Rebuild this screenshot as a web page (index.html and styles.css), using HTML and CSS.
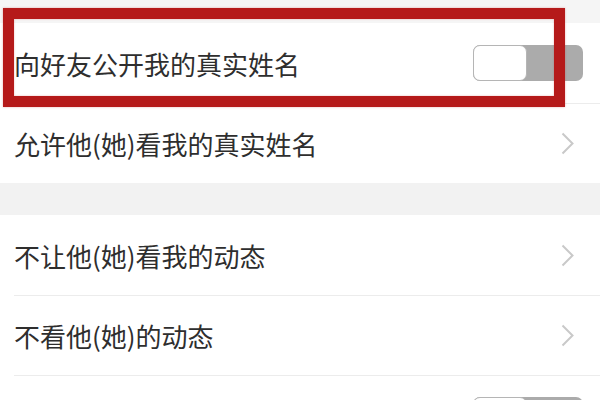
FILE: index.html
```html
<!DOCTYPE html>
<html lang="zh-CN">
<head>
<meta charset="utf-8">
<title>朋友权限</title>
<link rel="stylesheet" href="styles.css">
</head>
<body>
<div class="screen">
  <div class="top-gap"></div>
  <div class="group">
    <div class="row">
      <span class="label">向好友公开我的真实姓名</span>
      <span class="switch"><span class="thumb"></span></span>
    </div>
    <div class="row">
      <span class="label">允许他(她)看我的真实姓名</span>
      <svg class="chev" width="15" height="23" viewBox="0 0 15 23"><path d="M2.5 1.5 L12.5 11.5 L2.5 21.5" fill="none" stroke="#c9c9c9" stroke-width="2"/></svg>
    </div>
  </div>
  <div class="gap"></div>
  <div class="group">
    <div class="row">
      <span class="label">不让他(她)看我的动态</span>
      <svg class="chev" width="15" height="23" viewBox="0 0 15 23"><path d="M2.5 1.5 L12.5 11.5 L2.5 21.5" fill="none" stroke="#c9c9c9" stroke-width="2"/></svg>
    </div>
    <div class="row">
      <span class="label">不看他(她)的动态</span>
      <svg class="chev" width="15" height="23" viewBox="0 0 15 23"><path d="M2.5 1.5 L12.5 11.5 L2.5 21.5" fill="none" stroke="#c9c9c9" stroke-width="2"/></svg>
    </div>
    <div class="row">
      <span class="label">不让他(她)看我的朋友圈</span>
      <span class="switch"><span class="thumb"></span></span>
    </div>
  </div>
  <div class="highlight"></div>
</div>
</body>
</html>
```

FILE: styles.css
```css
html, body {
  margin: 0;
  padding: 0;
  background: #ffffff;
}

.screen {
  position: relative;
  width: 600px;
  height: 400px;
  overflow: hidden;
  background: #ffffff;
  font-family: "Noto Sans CJK SC", "Noto Sans", sans-serif;
}

.top-gap {
  height: 23px;
  background: #f5f5f5;
}

.gap {
  height: 32px;
  background: #f2f2f2;
}

.group {
  background: #ffffff;
}

.row {
  display: flex;
  align-items: center;
  justify-content: space-between;
  height: 80px;
  padding: 0 17px 0 14px;
  box-sizing: border-box;
  background: #ffffff;
}

.row + .row {
  background: linear-gradient(#ececec, #ececec) 14px 0 / 100% 1px no-repeat, #ffffff;
}

.label {
  font-size: 26px;
  line-height: 1;
  color: #2e2e2e;
  padding-top: 2px;
}

.chev {
  display: block;
  margin-right: 8px;
}

.switch {
  display: flex;
  width: 110px;
  height: 36px;
  box-sizing: border-box;
  background: #ababab;
  border-radius: 7px;
}

.thumb {
  width: 54px;
  height: 36px;
  box-sizing: border-box;
  background: #ffffff;
  border: 1.5px solid #b5b5b5;
  border-radius: 7px;
}

.highlight {
  position: absolute;
  left: 3px;
  top: 8px;
  width: 562px;
  height: 99px;
  box-sizing: border-box;
  border: 11px solid #b51a1a;
  box-shadow: 0 0 2px rgba(190, 30, 30, 0.35), inset 0 0 2px rgba(190, 30, 30, 0.35);
}
```
